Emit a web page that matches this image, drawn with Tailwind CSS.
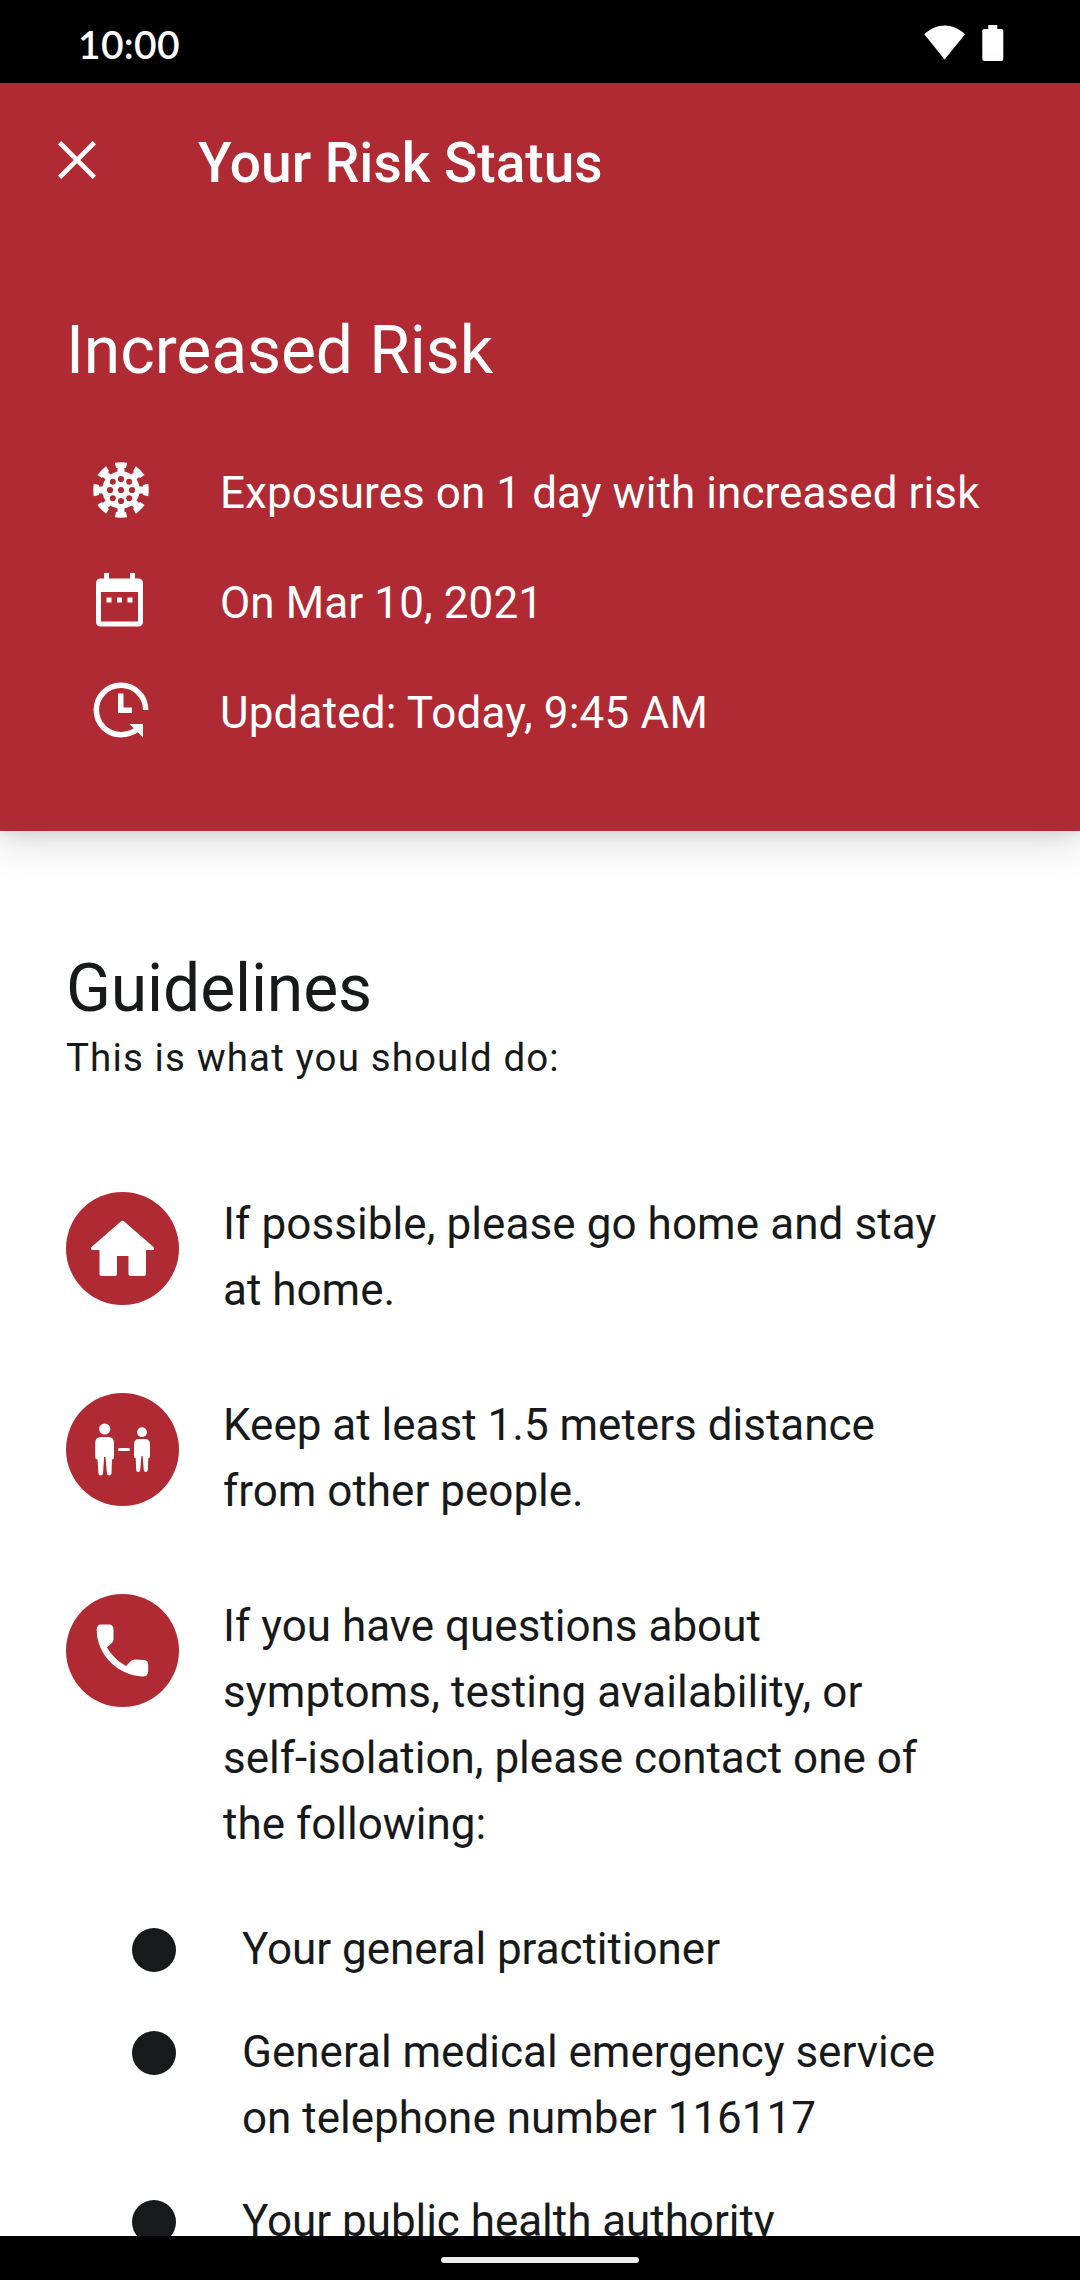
<!DOCTYPE html>
<html lang="en">
<head>
<meta charset="utf-8">
<title>Your Risk Status</title>
<script src="https://cdn.jsdelivr.net/npm/@tailwindcss/browser@4"></script>
</head>
<body class="bg-white">
<div class="flex h-[2280px] w-[1080px] flex-col overflow-hidden bg-white font-['Roboto',sans-serif] text-[#17191a]">
  <div class="flex h-[83px] shrink-0 items-center justify-between bg-black pl-[78px] pr-[76px] text-white">
    <span class="mt-[5px] font-['Lato',sans-serif] text-[39px] font-semibold leading-none tracking-[0.3px]">10:00</span>
    <svg class="mt-[3px] h-[36px] w-[80px]" viewBox="0 0 80 36" fill="currentColor"><path d="M.3 9.3C12.5-2.4 29-2.4 41 9.3L20.600 34.500z"/><path d="M64.300 0h9v4h4q2 0 2 2v28q0 2-2 2h-17q-2 0-2-2V6q0-2 2-2h4z"/></svg>
  </div>
  <header class="relative z-10 flex h-[748px] shrink-0 flex-col bg-[#b02a33] text-white shadow-[0_8px_40px_3px_rgba(0,0,0,0.14),0_2px_14px_rgba(0,0,0,0.1)]">
    <div class="flex h-[154px] items-center pl-[58px]">
      <svg class="h-[38px] w-[38px]" viewBox="0 0 38 38" fill="none" stroke="currentColor" stroke-width="4.600"><path d="M1.600 1.600l34.800 34.800M36.400 1.600l-34.800 34.800"/></svg>
      <h1 class="ml-[102px] mt-[5px] text-[55px] font-medium leading-[66px]">Your Risk Status</h1>
    </div>
    <h2 class="mt-[74px] pl-[66px] text-[66px] leading-[80px] tracking-[-0.1px]">Increased Risk</h2>
    <ul class="mt-[69px] flex flex-col gap-[44px] pl-[93px] text-[44px] leading-[66px]">
      <li class="flex items-center">
        <svg class="-mt-[6px] h-[56px] w-[56px]" viewBox="-28 -28 56 56" fill="currentColor">
          <defs><g id="spike"><path d="M-6.200-27.300q6.200-.8 12.400 0l-1.200 5.300H3.500v5h-7v-5H-5z"/></g></defs>
          <circle r="18.700"/>
          <use href="#spike"/><use href="#spike" transform="rotate(45)"/><use href="#spike" transform="rotate(90)"/><use href="#spike" transform="rotate(135)"/><use href="#spike" transform="rotate(180)"/><use href="#spike" transform="rotate(225)"/><use href="#spike" transform="rotate(270)"/><use href="#spike" transform="rotate(315)"/>
          <g fill="#b02a33"><circle r="3.100"/><circle cx="11" r="3.100"/><circle cx="-11" r="3.100"/><circle cy="11" r="3.100"/><circle cy="-11" r="3.100"/><circle cx="8.200" cy="8.200" r="3"/><circle cx="-8.200" cy="8.200" r="3"/><circle cx="8.200" cy="-8.200" r="3"/><circle cx="-8.200" cy="-8.200" r="3"/></g>
        </svg>
        <span class="ml-[71px] tracking-[0.075px]">Exposures on 1 day with increased risk</span>
      </li>
      <li class="flex items-center">
        <svg class="-mt-[6px] h-[56px] w-[56px]" viewBox="0 0 56 56" fill="currentColor"><path fill-rule="evenodd" d="M11 1h5v5.500h21V1h5v5.500h3q5 0 5 5V49.500q0 5-5 5H8q-5 0-5-5V11.500q0-5 5-5h3zM8 20v29.500h37V20z"/><path d="M13.500 25.500h5v5h-5zM24 25.500h5v5h-5zM34.500 25.500h5v5h-5z"/></svg>
        <span class="ml-[71px] tracking-[0.1px]">On Mar 10, 2021</span>
      </li>
      <li class="flex items-center">
        <svg class="-mt-[6px] h-[56px] w-[56px]" viewBox="0 0 56 56" fill="currentColor"><path d="M52.700 28A24.700 24.700 0 1 0 28 52.700Q37 52.700 45.500 46.500" fill="none" stroke="currentColor" stroke-width="5.500"/><path d="M25 11.500h5.500v14h8.500v5.500H25zM36.500 42H50v13.500z"/></svg>
        <span class="ml-[71px] tracking-[0.18px]">Updated: Today, 9:45 AM</span>
      </li>
    </ul>
  </header>
  <main class="min-h-0 flex-1 overflow-hidden pl-[66px]">
    <h2 class="mt-[118px] text-[66px] leading-[80px] tracking-[-0.12px]">Guidelines</h2>
    <p class="mt-[4px] text-[38.500px] leading-[50px] tracking-[1.120px]">This is what you should do:</p>
    <ul class="mt-[109px] flex flex-col text-[44px] leading-[66px]">
      <li class="flex h-[201px]">
        <svg class="h-[113px] w-[113px] shrink-0" viewBox="0 0 113 113"><circle cx="56.500" cy="56.500" r="56.500" fill="#b02a33"/><path d="M54.500 29.700q2-1.700 4 0L87.500 55q1.500 3-1 3h-6.500v24q0 2-2 2H64.500q-2 0-2-2V64H51v18q0 2-2 2H35.500q-2 0-2-2V58H27q-3 0-1.500-3z" fill="#fff"/></svg>
        <p class="-mt-px ml-[44px]"><span class="tracking-[0.08px]">If possible, please go home and stay</span><br>at home.</p>
      </li>
      <li class="flex h-[201px]">
        <svg class="h-[113px] w-[113px] shrink-0" viewBox="0 0 113 113"><circle cx="56.500" cy="56.500" r="56.500" fill="#b02a33"/>
          <g fill="#fff"><circle cx="38.700" cy="36" r="5.600"/><path d="M35 44h7.500q5.500 0 5.500 6V64q0 2.500-2 2.500l-.5 14q-.3 2-2.300 2t-2.300-2L39.500 64h-1.400L37 80.500q-.2 2-2.300 2t-2.300-2L31.500 66.500q-2.300 0-2.300-2.500V50q0-6 5.800-6z"/><rect x="52" y="55" width="12" height="3" rx="1.500"/><circle cx="76" cy="39.200" r="4.900"/><path d="M73 46h6q5 0 5 5.500V63q0 2.200-1.700 2.200L81.800 77q-.2 2-2 2t-2-2L76.600 63h-1.200L74.200 77q-.2 2-2 2t-2-2L69.700 65.200q-1.700 0-1.700-2.200V51.500q0-5.500 5-5.500z"/></g></svg>
        <p class="-mt-px ml-[44px]">Keep at least 1.5 meters distance<br>from other people.</p>
      </li>
      <li class="flex">
        <svg class="h-[113px] w-[113px] shrink-0" viewBox="0 0 113 113"><circle cx="56.500" cy="56.500" r="56.500" fill="#b02a33"/><path d="M35 30.500H43q4.300 0 4.500 5V45.500q0 2-1.500 3.200L41 53.500Q47.500 65 60 72l5-5q1.500-1.500 3.700-1.500L78 66q4.200.3 4.200 4.500V77q0 5.500-5.500 5.500C52 81.500 31 61 30.700 36q0-5.500 4.300-5.500z" fill="#fff"/></svg>
        <p class="-mt-px ml-[44px]">If you have questions about<br><span class="tracking-[0.12px]">symptoms, testing availability, or</span><br>self-isolation, please contact one of<br>the following:</p>
      </li>
    </ul>
    <ul class="mt-[59px] flex flex-col gap-[37px] pl-[66px] text-[44px] leading-[66px]">
      <li class="flex"><span class="mt-[12px] h-[44px] w-[44px] shrink-0 rounded-full bg-[#17191a]"></span><p class="ml-[66px] tracking-[-0.04px]">Your general practitioner</p></li>
      <li class="flex"><span class="mt-[12px] h-[44px] w-[44px] shrink-0 rounded-full bg-[#17191a]"></span><p class="ml-[66px]">General medical emergency service<br>on telephone number 116117</p></li>
      <li class="flex"><span class="mt-[12px] h-[44px] w-[44px] shrink-0 rounded-full bg-[#17191a]"></span><p class="ml-[66px] tracking-[-0.04px]">Your public health authority</p></li>
    </ul>
  </main>
  <div class="flex h-[44px] shrink-0 justify-center bg-black pt-[21px]"><span class="h-[6px] w-[198px] rounded-full bg-[#ececec]"></span></div>
</div>
</body>
</html>
